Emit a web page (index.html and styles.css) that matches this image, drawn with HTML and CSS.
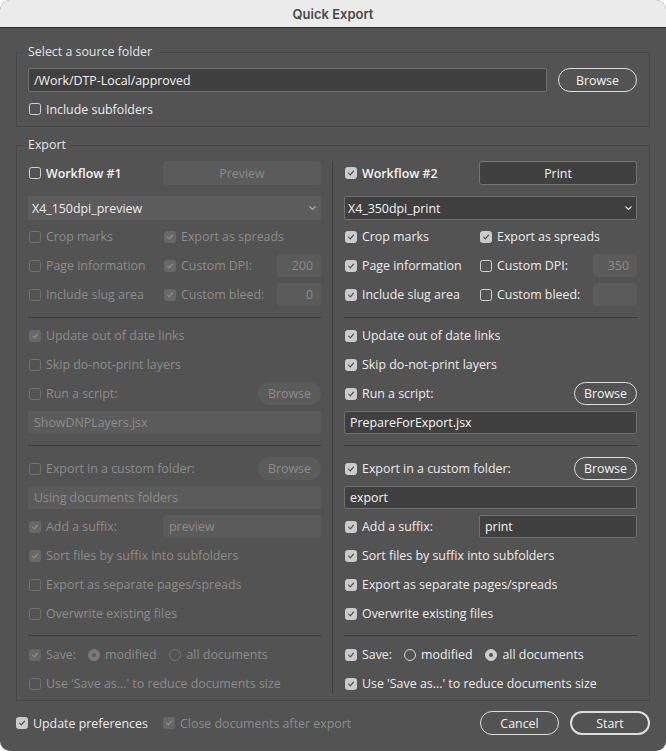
FILE: index.html
```html
<!DOCTYPE html>
<html>
<head>
<meta charset="utf-8">
<title>Quick Export</title>
<link rel="stylesheet" href="styles.css">
</head>
<body>
<div class="window">
  <div class="titlebar">Quick Export</div>
  <div class="content">
    <fieldset class="group source">
      <legend>Select a source folder</legend>
      <div class="path-row">
        <div class="field on path">/Work/DTP-Local/approved</div>
        <div class="pill on wide">Browse</div>
      </div>
      <div class="ck src-ck"><span class="cb"></span>Include subfolders</div>
    </fieldset>

    <fieldset class="group export">
      <legend>Export</legend>
      <div class="columns">
        <!-- Workflow 1 (disabled) -->
        <div class="col">
          <div class="head">
            <div class="ck"><span class="cb"></span><span class="wf">Workflow #1</span></div>
            <div class="btn off">Preview</div>
          </div>
          <div class="select off"><span>X4_150dpi_preview</span><svg class="chev" viewBox="0 0 7 4" width="7" height="4"><polyline points="0.5,0.5 3.5,3.5 6.5,0.5"/></svg></div>
          <div class="opts">
            <div class="ck dis"><span class="cb"></span>Crop marks</div>
            <div class="ck dis"><span class="cb chk"><svg viewBox="0 0 12 12" width="12" height="12"><path d="M3.2 6.2 5.2 8.2 8.9 3.9"/></svg></span>Export as spreads</div>
            <div class="ck dis"><span class="cb"></span>Page information</div>
            <div class="ck dis"><span class="cb chk"><svg viewBox="0 0 12 12" width="12" height="12"><path d="M3.2 6.2 5.2 8.2 8.9 3.9"/></svg></span>Custom DPI:<span class="num off">200</span></div>
            <div class="ck dis"><span class="cb"></span>Include slug area</div>
            <div class="ck dis"><span class="cb chk"><svg viewBox="0 0 12 12" width="12" height="12"><path d="M3.2 6.2 5.2 8.2 8.9 3.9"/></svg></span>Custom bleed:<span class="num off">0</span></div>
          </div>
          <div class="sep s1"></div>
          <div class="ck dis row"><span class="cb chk"><svg viewBox="0 0 12 12" width="12" height="12"><path d="M3.2 6.2 5.2 8.2 8.9 3.9"/></svg></span>Update out of date links</div>
          <div class="ck dis row"><span class="cb"></span>Skip do-not-print layers</div>
          <div class="ck dis row"><span class="cb"></span>Run a script:<div class="pill off small">Browse</div></div>
          <div class="field off">ShowDNPLayers.jsx</div>
          <div class="sep s2"></div>
          <div class="ck dis row"><span class="cb"></span>Export in a custom folder:<div class="pill off small">Browse</div></div>
          <div class="field off">Using documents folders</div>
          <div class="suffix">
            <div class="ck dis"><span class="cb chk"><svg viewBox="0 0 12 12" width="12" height="12"><path d="M3.2 6.2 5.2 8.2 8.9 3.9"/></svg></span>Add a suffix:</div>
            <div class="field off sfx">preview</div>
          </div>
          <div class="ck dis row"><span class="cb chk"><svg viewBox="0 0 12 12" width="12" height="12"><path d="M3.2 6.2 5.2 8.2 8.9 3.9"/></svg></span>Sort files by suffix into subfolders</div>
          <div class="ck dis row"><span class="cb"></span>Export as separate pages/spreads</div>
          <div class="ck dis row"><span class="cb"></span>Overwrite existing files</div>
          <div class="sep s3"></div>
          <div class="ck dis row"><span class="cb chk"><svg viewBox="0 0 12 12" width="12" height="12"><path d="M3.2 6.2 5.2 8.2 8.9 3.9"/></svg></span><span class="save-lbl">Save:</span><span class="rd sel"></span><span class="rd-lbl">modified</span><span class="rd"></span><span class="rd-lbl">all documents</span></div>
          <div class="ck dis row"><span class="cb"></span>Use 'Save as...' to reduce documents size</div>
        </div>

        <div class="vsep"></div>

        <!-- Workflow 2 (enabled) -->
        <div class="col">
          <div class="head">
            <div class="ck"><span class="cb chk"><svg viewBox="0 0 12 12" width="12" height="12"><path d="M3.2 6.2 5.2 8.2 8.9 3.9"/></svg></span><span class="wf">Workflow #2</span></div>
            <div class="btn on">Print</div>
          </div>
          <div class="select on"><span>X4_350dpi_print</span><svg class="chev" viewBox="0 0 7 4" width="7" height="4"><polyline points="0.5,0.5 3.5,3.5 6.5,0.5"/></svg></div>
          <div class="opts">
            <div class="ck"><span class="cb chk"><svg viewBox="0 0 12 12" width="12" height="12"><path d="M3.2 6.2 5.2 8.2 8.9 3.9"/></svg></span>Crop marks</div>
            <div class="ck"><span class="cb chk"><svg viewBox="0 0 12 12" width="12" height="12"><path d="M3.2 6.2 5.2 8.2 8.9 3.9"/></svg></span>Export as spreads</div>
            <div class="ck"><span class="cb chk"><svg viewBox="0 0 12 12" width="12" height="12"><path d="M3.2 6.2 5.2 8.2 8.9 3.9"/></svg></span>Page information</div>
            <div class="ck"><span class="cb"></span>Custom DPI:<span class="num off">350</span></div>
            <div class="ck"><span class="cb chk"><svg viewBox="0 0 12 12" width="12" height="12"><path d="M3.2 6.2 5.2 8.2 8.9 3.9"/></svg></span>Include slug area</div>
            <div class="ck"><span class="cb"></span>Custom bleed:<span class="num off"></span></div>
          </div>
          <div class="sep s1"></div>
          <div class="ck row"><span class="cb chk"><svg viewBox="0 0 12 12" width="12" height="12"><path d="M3.2 6.2 5.2 8.2 8.9 3.9"/></svg></span>Update out of date links</div>
          <div class="ck row"><span class="cb chk"><svg viewBox="0 0 12 12" width="12" height="12"><path d="M3.2 6.2 5.2 8.2 8.9 3.9"/></svg></span>Skip do-not-print layers</div>
          <div class="ck row"><span class="cb chk"><svg viewBox="0 0 12 12" width="12" height="12"><path d="M3.2 6.2 5.2 8.2 8.9 3.9"/></svg></span>Run a script:<div class="pill on small">Browse</div></div>
          <div class="field on">PrepareForExport.jsx</div>
          <div class="sep s2"></div>
          <div class="ck row"><span class="cb chk"><svg viewBox="0 0 12 12" width="12" height="12"><path d="M3.2 6.2 5.2 8.2 8.9 3.9"/></svg></span>Export in a custom folder:<div class="pill on small">Browse</div></div>
          <div class="field on">export</div>
          <div class="suffix">
            <div class="ck"><span class="cb chk"><svg viewBox="0 0 12 12" width="12" height="12"><path d="M3.2 6.2 5.2 8.2 8.9 3.9"/></svg></span>Add a suffix:</div>
            <div class="field on sfx">print</div>
          </div>
          <div class="ck row"><span class="cb chk"><svg viewBox="0 0 12 12" width="12" height="12"><path d="M3.2 6.2 5.2 8.2 8.9 3.9"/></svg></span>Sort files by suffix into subfolders</div>
          <div class="ck row"><span class="cb chk"><svg viewBox="0 0 12 12" width="12" height="12"><path d="M3.2 6.2 5.2 8.2 8.9 3.9"/></svg></span>Export as separate pages/spreads</div>
          <div class="ck row"><span class="cb chk"><svg viewBox="0 0 12 12" width="12" height="12"><path d="M3.2 6.2 5.2 8.2 8.9 3.9"/></svg></span>Overwrite existing files</div>
          <div class="sep s3"></div>
          <div class="ck row"><span class="cb chk"><svg viewBox="0 0 12 12" width="12" height="12"><path d="M3.2 6.2 5.2 8.2 8.9 3.9"/></svg></span><span class="save-lbl">Save:</span><span class="rd"></span><span class="rd-lbl">modified</span><span class="rd sel"></span><span class="rd-lbl">all documents</span></div>
          <div class="ck row"><span class="cb chk"><svg viewBox="0 0 12 12" width="12" height="12"><path d="M3.2 6.2 5.2 8.2 8.9 3.9"/></svg></span>Use 'Save as...' to reduce documents size</div>
        </div>
      </div>
    </fieldset>

    <div class="footer">
      <div class="ck foot1"><span class="cb chk"><svg viewBox="0 0 12 12" width="12" height="12"><path d="M3.2 6.2 5.2 8.2 8.9 3.9"/></svg></span>Update preferences</div>
      <div class="ck dis foot2"><span class="cb chk"><svg viewBox="0 0 12 12" width="12" height="12"><path d="M3.2 6.2 5.2 8.2 8.9 3.9"/></svg></span>Close documents after export</div>
      <div class="pill on cancel">Cancel</div>
      <div class="pill on start">Start</div>
    </div>
  </div>
</div>
</body>
</html>
```

FILE: styles.css
```css
* { box-sizing: border-box; }

html, body {
  margin: 0;
  padding: 0;
  background: #ffffff;
}

body {
  font-family: "Open Sans", "Liberation Sans", sans-serif;
  font-size: 12.4px;
  color: #ebebeb;
}

.window {
  width: 666px;
  height: 751px;
  background: #535353;
  border-radius: 10px;
  overflow: hidden;
  display: flex;
  flex-direction: column;
}

.titlebar {
  height: 28px;
  flex: none;
  background: #ebebeb;
  border-bottom: 1px solid #2e2e2e;
  display: flex;
  align-items: center;
  justify-content: center;
  font-family: Inter, "Open Sans", sans-serif;
  font-weight: 600;
  font-size: 13px;
  color: #4a4a4a;
}

.content {
  padding: 16px 16px 0;
}

/* group boxes */
.group {
  margin: 0;
  padding: 8px 12px 8px 11px;
  border: 1px solid #474747;
  min-width: 0;
}

.group legend {
  padding: 0 4px;
  margin-left: -4px;
  line-height: 16px;
  color: #e4e4e4;
}

.export {
  margin-top: 10px;
  padding-bottom: 2px;
}

/* source */
.path-row {
  display: flex;
  align-items: center;
  gap: 11px;
  height: 24px;
}

.path-row .path {
  flex: 1;
  margin-top: 0;
  height: 24px;
}

.src-ck {
  height: 18px;
  margin-top: 8px;
}

/* checkbox label */
.ck {
  display: flex;
  align-items: center;
  white-space: nowrap;
  color: #ececec;
}

.ck.dis {
  color: #8c8c8c;
}

.cb {
  flex: none;
  width: 12px;
  height: 12px;
  margin: 0 5px 0 1px;
  border: 1px solid #d2d2d2;
  border-radius: 2.5px;
  display: inline-flex;
  align-items: center;
  justify-content: center;
}

.cb svg {
  display: block;
  fill: none;
  stroke: #555555;
  stroke-width: 1.5;
  stroke-linecap: round;
  stroke-linejoin: round;
}

.cb.chk {
  background: #cbcbcb;
  border-color: #cbcbcb;
}

.ck.dis .cb {
  border-color: #727272;
}

.ck.dis .cb.chk {
  background: #686868;
  border-color: #686868;
}

.ck.dis .cb.chk svg {
  stroke: #8e8e8e;
}

/* radios */
.save-lbl {
  width: 42px;
}

.rd {
  flex: none;
  width: 12px;
  height: 12px;
  border-radius: 50%;
  border: 1px solid #d4d4d4;
  margin-right: 5px;
  display: inline-flex;
  align-items: center;
  justify-content: center;
}

.rd.sel {
  background: #cdcdcd;
  border-color: #cdcdcd;
}

.rd.sel::after {
  content: "";
  width: 4px;
  height: 4px;
  border-radius: 50%;
  background: #505050;
}

.ck.dis .rd {
  border-color: #737373;
}

.ck.dis .rd.sel {
  background: #797979;
  border-color: #797979;
}

.ck.dis .rd.sel::after {
  background: #5a5a5a;
}

.rd-lbl {
  margin-right: 13px;
}

/* columns */
.columns {
  display: grid;
  grid-template-columns: 293px 1px 293px;
  column-gap: 11px;
}

.vsep {
  background: #3c3c3c;
  margin-bottom: 5px;
}

.col {
  display: flex;
  flex-direction: column;
  min-width: 0;
}

.head {
  height: 24px;
  display: grid;
  grid-template-columns: 135px 1fr;
  align-items: center;
}

.wf {
  font-weight: 600;
  color: #f2f2f2;
}

.btn {
  height: 24px;
  border-radius: 3px;
  display: flex;
  align-items: center;
  justify-content: center;
}

.btn.off {
  background: #5b5b5b;
  color: #8a8a8a;
}

.btn.on {
  background: #404040;
  border: 1px solid #757575;
  color: #f2f2f2;
}

.select {
  height: 24px;
  margin-top: 11px;
  border-radius: 2px;
  display: flex;
  align-items: center;
  justify-content: space-between;
  padding: 0 5px 0 4px;
  color: #ececec;
}

.select.off {
  background: #5c5c5c;
}

.select.on {
  background: #3f3f3f;
  border: 1px solid #717171;
  padding: 0 4px 0 3px;
  color: #f4f4f4;
}

.chev {
  display: block;
  fill: none;
  stroke: #d8d8d8;
  stroke-width: 1.2;
}

.select.off .chev {
  stroke: #a8a8a8;
}

.opts {
  display: grid;
  grid-template-columns: 135px 1fr;
  grid-auto-rows: 29px;
  margin-top: 2px;
}

.num {
  margin-left: auto;
  width: 44px;
  height: 23px;
  border-radius: 2px;
  display: flex;
  align-items: center;
  justify-content: flex-end;
  padding-right: 8px;
}

.num.off {
  background: #5b5b5b;
  color: #8a8a8a;
}

.sep {
  height: 1px;
  background: #3c3c3c;
  flex: none;
}

.s1 { margin: 8px 0 3px; }
.s2 { margin: 11px 0 8px; }
.s3 { margin: 7px 0 4px; }

.row {
  height: 29px;
  flex: none;
}

/* fields */
.field {
  height: 23px;
  margin-top: 3px;
  border-radius: 2px;
  display: flex;
  align-items: center;
  padding: 0 6px;
  flex: none;
  white-space: nowrap;
}

.field.off {
  background: #5b5b5b;
  color: #8c8c8c;
}

.field.on {
  background: #404040;
  border: 1px solid #6f6f6f;
  color: #f4f4f4;
  padding: 0 5px;
}

.suffix {
  display: grid;
  grid-template-columns: 135px 1fr;
  align-items: center;
  height: 29px;
  margin-top: 3px;
}

.suffix .sfx {
  margin-top: 0;
}

/* pill buttons */
.pill {
  height: 23px;
  border-radius: 12px;
  display: flex;
  align-items: center;
  justify-content: center;
  flex: none;
}

.pill.on {
  border: 1.5px solid #dedede;
  color: #f2f2f2;
}

.pill.off {
  background: #5b5b5b;
  color: #8c8c8c;
}

.pill.small {
  width: 63px;
  margin-left: auto;
}

.pill.wide {
  width: 79px;
  height: 24px;
}

/* footer */
.footer {
  margin-top: 10px;
  height: 24px;
  display: flex;
  align-items: center;
}

.foot1 {
  width: 147px;
}

.foot1 .cb,
.foot2 .cb {
  margin-left: 0;
}

.foot2 {
  flex: 1;
}

.cancel {
  width: 79px;
  height: 24px;
}

.start {
  width: 80px;
  height: 24px;
  margin-left: 11px;
  border-width: 2px !important;
}
```
